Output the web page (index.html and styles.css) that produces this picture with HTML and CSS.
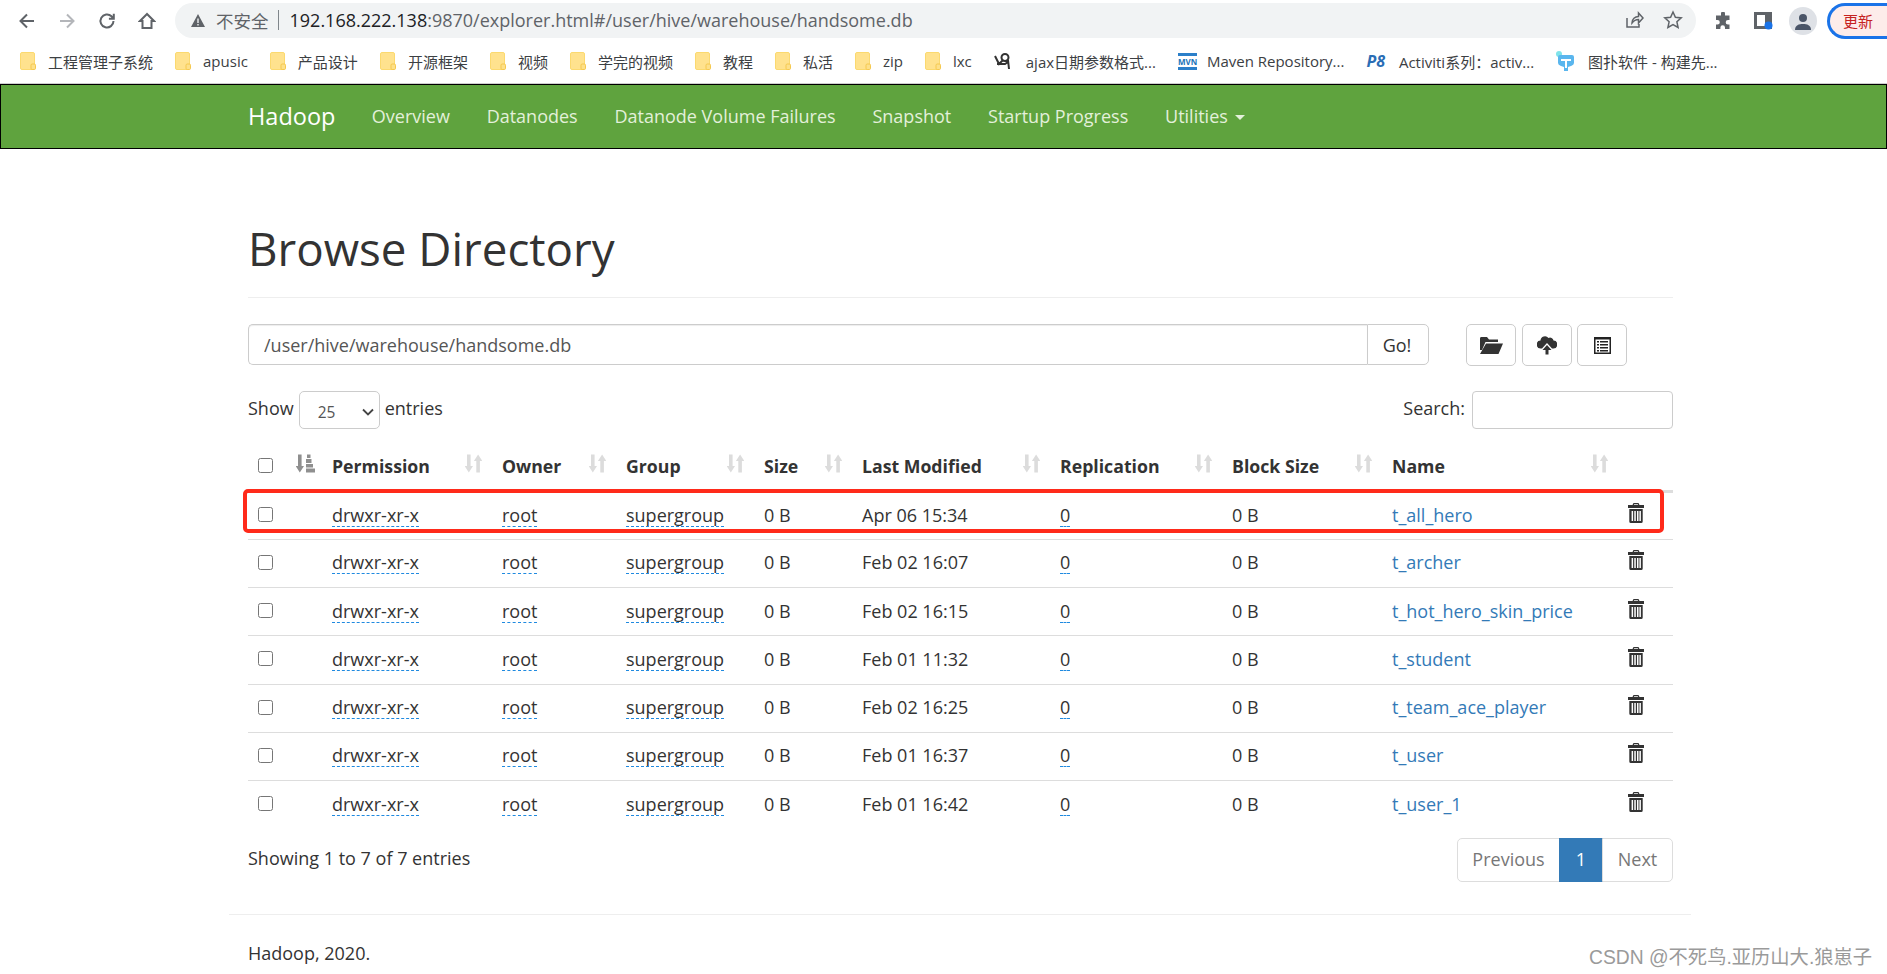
FILE: index.html
```html
<!DOCTYPE html>
<html lang="zh-CN">
<head>
<meta charset="utf-8">
<title>Browsing HDFS</title>
<link rel="stylesheet" href="styles.css">
</head>
<body>
<svg class="defs" aria-hidden="true">
  <symbol id="i-sort" viewBox="0 0 17 19"><path d="M2 .500h3.600V12H8l-4.200 6.500L-.4 12H2zM11.300 7H8.900L13.100.5 17.300 7h-2.400v11.500h-3.600z"/></symbol>
  <symbol id="i-sort-asc" viewBox="0 0 19 19"><path d="M2 .500h3.600V12H8l-4.200 6.500L-.4 12H2zM11 .5h3.500v3.500H11zM10 5h5.500v4H10zM10 10h7v3.500h-7zM10 14.500h9v4h-9z"/></symbol>
  <symbol id="i-trash" viewBox="0 0 16 20"><path fill-rule="evenodd" d="M5.500 0h5l1 2H16v3H0V2h4.500zM6.200 1.200l-.4.8h4.400l-.4-.8zM1.300 6h13.400v12.500q0 1.500-1.500 1.500H2.800q-1.500 0-1.500-1.500zM3.600 8v10h1.500V8zM6.300 8v10h1.500V8zM9 8v10h1.500V8zM11.400 8v10h1.500V8z"/></symbol>
  <symbol id="i-folder" viewBox="0 0 16 18"><rect x=".5" y=".5" width="14" height="17" rx="1.500" fill="#ffe28e" stroke="#fbd96f"/><rect x="11" y="12" width="4.500" height="5.500" rx="1.200" fill="#fde08a" stroke="#f5c84f"/></symbol>
</svg>

<header class="chrome">
  <div class="toolbar">
    <span class="tb-btn"><svg width="18" height="18" viewBox="0 0 18 18" class="ic-line"><path d="M16 9H3M9 2.500 2.500 9 9 15.500"/></svg></span>
    <span class="tb-btn"><svg width="18" height="18" viewBox="0 0 18 18" class="ic-line ic-off"><path d="M2 9h13M9 2.500 15.500 9 9 15.500"/></svg></span>
    <span class="tb-btn"><svg width="18" height="18" viewBox="0 0 18 18" class="ic-line"><path d="M15.500 9a6.500 6.500 0 1 1-2-4.700L15.500 6.500M15.800 1.800v4.900h-4.900"/></svg></span>
    <span class="tb-btn"><svg width="18" height="18" viewBox="0 0 18 18" class="ic-line"><path d="M9 2 2 9h2.500v7h9V9H16z"/></svg></span>
    <div class="omnibox">
      <svg class="warn" width="14" height="13" viewBox="0 0 14 13"><path fill="#5f6368" d="M7 0 14 13H0zM6.300 4.500v4.500h1.400V4.500zM6.300 10v1.400h1.400V10z" fill-rule="evenodd"/></svg>
      <span class="insecure">不安全</span><span class="sep"></span>
      <span class="url"><span class="host">192.168.222.138</span>:9870/explorer.html#/user/hive/warehouse/handsome.db</span>
      <span class="omni-icons">
        <svg width="20" height="20" viewBox="0 0 20 20" class="ic-thin"><path d="M3 8v9h12v-3M8 13c0-4 3-6.500 6.500-6.500V3L19 8l-4.500 5V9.500C11.500 9.500 9.500 11 8 13z"/></svg>
        <svg width="20" height="20" viewBox="0 0 20 20" class="ic-thin"><path d="m10 2 2.400 5.300 5.800.6-4.300 3.900 1.200 5.700-5.100-2.900-5.100 2.900 1.200-5.700-4.300-3.900 5.800-.6z"/></svg>
      </span>
    </div>
    <span class="ext-btn"><svg width="18" height="18" viewBox="0 0 18 18"><path fill="#5f6368" d="M7 1.500a2 2 0 0 1 4 0V3.500h4.500V8H14a2.300 2.300 0 0 0 0 4.600h1.500V17H11v-1.500a2.300 2.300 0 0 0-4.600 0V17H2v-4.500H3.500a2.300 2.300 0 0 0 0-4.600H2V3.500h5z"/></svg></span>
    <span class="ext-btn"><svg width="19" height="18" viewBox="0 0 19 18"><path fill="#5f6368" fill-rule="evenodd" d="M0 0h18v17H0zM3 3v11h8V3z"/><circle cx="14.500" cy="13.500" r="4" fill="#1a73e8"/></svg></span>
    <span class="ext-btn"><span class="avatar"><svg width="18" height="20" viewBox="0 0 18 20"><circle cx="9" cy="6" r="4" fill="#4a5568"/><path fill="#4a5568" d="M1 18c0-5 4-6 8-6s8 1 8 6z"/></svg></span></span>
    <span class="update">更新</span>
  </div>
  <nav class="bookmarks">
    <a class="bm"><svg class="bm-folder"><use href="#i-folder"/></svg>工程管理子系统</a>
    <a class="bm"><svg class="bm-folder"><use href="#i-folder"/></svg>apusic</a>
    <a class="bm"><svg class="bm-folder"><use href="#i-folder"/></svg>产品设计</a>
    <a class="bm"><svg class="bm-folder"><use href="#i-folder"/></svg>开源框架</a>
    <a class="bm"><svg class="bm-folder"><use href="#i-folder"/></svg>视频</a>
    <a class="bm"><svg class="bm-folder"><use href="#i-folder"/></svg>学完的视频</a>
    <a class="bm"><svg class="bm-folder"><use href="#i-folder"/></svg>教程</a>
    <a class="bm"><svg class="bm-folder"><use href="#i-folder"/></svg>私活</a>
    <a class="bm"><svg class="bm-folder"><use href="#i-folder"/></svg>zip</a>
    <a class="bm"><svg class="bm-folder"><use href="#i-folder"/></svg>lxc</a>
    <a class="bm"><svg class="bm-fav" viewBox="0 0 18 18"><path fill="none" stroke="#333" stroke-width="2" d="M1 4 5 12 9 8M11 2a3.500 3.500 0 1 1 0 7 3.500 3.500 0 0 1 0-7zM14 8l1 9M3 12h8l3-2"/></svg>ajax日期参数格式...</a>
    <a class="bm"><span class="mvn">MVN</span>Maven Repository...</a>
    <a class="bm"><span class="ps">P8</span>Activiti系列：activ...</a>
    <a class="bm"><svg class="bm-fav" viewBox="0 0 18 20"><circle cx="3" cy="3" r="3" fill="#7fe3ea"/><path fill="#5ab6ee" d="M4 4h12q2 0 2 2v6q0 2-3 3l-3 1v4H8v-4L5 15q-3-1-3-3V6q0-2 2-2z"/><path fill="#fff" d="M5 8h10v2H11v7H9v-7H5z"/></svg>图扑软件 - 构建先...</a>
  </nav>
</header>

<nav class="navbar">
  <a class="brand">Hadoop</a>
  <a class="nav-link">Overview</a>
  <a class="nav-link">Datanodes</a>
  <a class="nav-link">Datanode Volume Failures</a>
  <a class="nav-link">Snapshot</a>
  <a class="nav-link">Startup Progress</a>
  <a class="nav-link">Utilities <span class="caret"></span></a>
</nav>

<main class="container">
  <div class="page-header"><h1>Browse Directory</h1></div>

  <div class="path-row">
    <div class="input-group">
      <input class="path-input" type="text" value="/user/hive/warehouse/handsome.db">
      <button class="go" type="button">Go!</button>
    </div>
    <div class="tools">
      <button class="tool" type="button"><svg width="24" height="19" viewBox="0 0 24 19"><path fill="#333" d="M2 1h6l2 2.500h9V6H6.500L3 14H1V2.500Q1 1 2 1zM7 7.500h17L19.500 18H1z"/></svg></button>
      <button class="tool" type="button"><svg width="20" height="20" viewBox="0 0 20 20"><path fill="#333" d="M5 13.500H4a4 4 0 0 1-.5-8A4.500 4.500 0 0 1 11.500 3a3.500 3.500 0 0 1 5 2.500 4 4 0 0 1-.5 8h-1L10 8zM10 10l4.500 5H11.500v4.500h-3V15H5.500z"/></svg></button>
      <button class="tool" type="button"><svg width="17" height="17" viewBox="0 0 17 17"><path fill="#222" fill-rule="evenodd" d="M0 0h17v17H0zM1.500 2.500v13h14v-13zM3 4h2v1.500H3zM6 4h8v1.500H6zM3 7h2v1.500H3zM6 7h8v1.500H6zM3 10h2v1.500H3zM6 10h8v1.500H6zM3 13h2v1.500H3zM6 13h8v1.500H6z"/></svg></button>
    </div>
  </div>

  <div class="table-controls">
    <label class="length">Show
      <span class="select-wrap"><select class="length-select"><option>25</option></select><svg class="chevron" width="12" height="8" viewBox="0 0 12 8"><path d="M1 1.500 6 6.500l5-5" fill="none" stroke="#444" stroke-width="1.800"/></svg></span>
      entries</label>
    <label class="search">Search: <input class="search-input" type="search"></label>
  </div>

  <div class="table-wrap">
    <table class="files">
      <colgroup>
        <col class="c1"><col class="c2"><col class="c3"><col class="c4"><col class="c5"><col class="c6"><col class="c7"><col class="c8"><col class="c9"><col class="c10">
      </colgroup>
      <thead>
        <tr>
          <th><div class="th"><input type="checkbox" class="cb"><svg class="sort-active"><use href="#i-sort-asc"/></svg></div></th>
          <th><div class="th">Permission<svg class="sort"><use href="#i-sort"/></svg></div></th>
          <th><div class="th">Owner<svg class="sort"><use href="#i-sort"/></svg></div></th>
          <th><div class="th">Group<svg class="sort"><use href="#i-sort"/></svg></div></th>
          <th><div class="th">Size<svg class="sort"><use href="#i-sort"/></svg></div></th>
          <th><div class="th">Last Modified<svg class="sort"><use href="#i-sort"/></svg></div></th>
          <th><div class="th">Replication<svg class="sort"><use href="#i-sort"/></svg></div></th>
          <th><div class="th">Block Size<svg class="sort"><use href="#i-sort"/></svg></div></th>
          <th><div class="th">Name<svg class="sort"><use href="#i-sort"/></svg></div></th>
          <th></th>
        </tr>
      </thead>
      <tbody>
        <tr><td><input type="checkbox" class="cb"></td><td><span class="dash">drwxr-xr-x</span></td><td><span class="dash">root</span></td><td><span class="dash">supergroup</span></td><td>0 B</td><td>Apr 06 15:34</td><td><span class="dash">0</span></td><td>0 B</td><td><a class="link">t_all_hero</a></td><td><svg class="trash"><use href="#i-trash"/></svg></td></tr>
        <tr><td><input type="checkbox" class="cb"></td><td><span class="dash">drwxr-xr-x</span></td><td><span class="dash">root</span></td><td><span class="dash">supergroup</span></td><td>0 B</td><td>Feb 02 16:07</td><td><span class="dash">0</span></td><td>0 B</td><td><a class="link">t_archer</a></td><td><svg class="trash"><use href="#i-trash"/></svg></td></tr>
        <tr><td><input type="checkbox" class="cb"></td><td><span class="dash">drwxr-xr-x</span></td><td><span class="dash">root</span></td><td><span class="dash">supergroup</span></td><td>0 B</td><td>Feb 02 16:15</td><td><span class="dash">0</span></td><td>0 B</td><td><a class="link">t_hot_hero_skin_price</a></td><td><svg class="trash"><use href="#i-trash"/></svg></td></tr>
        <tr><td><input type="checkbox" class="cb"></td><td><span class="dash">drwxr-xr-x</span></td><td><span class="dash">root</span></td><td><span class="dash">supergroup</span></td><td>0 B</td><td>Feb 01 11:32</td><td><span class="dash">0</span></td><td>0 B</td><td><a class="link">t_student</a></td><td><svg class="trash"><use href="#i-trash"/></svg></td></tr>
        <tr><td><input type="checkbox" class="cb"></td><td><span class="dash">drwxr-xr-x</span></td><td><span class="dash">root</span></td><td><span class="dash">supergroup</span></td><td>0 B</td><td>Feb 02 16:25</td><td><span class="dash">0</span></td><td>0 B</td><td><a class="link">t_team_ace_player</a></td><td><svg class="trash"><use href="#i-trash"/></svg></td></tr>
        <tr><td><input type="checkbox" class="cb"></td><td><span class="dash">drwxr-xr-x</span></td><td><span class="dash">root</span></td><td><span class="dash">supergroup</span></td><td>0 B</td><td>Feb 01 16:37</td><td><span class="dash">0</span></td><td>0 B</td><td><a class="link">t_user</a></td><td><svg class="trash"><use href="#i-trash"/></svg></td></tr>
        <tr><td><input type="checkbox" class="cb"></td><td><span class="dash">drwxr-xr-x</span></td><td><span class="dash">root</span></td><td><span class="dash">supergroup</span></td><td>0 B</td><td>Feb 01 16:42</td><td><span class="dash">0</span></td><td>0 B</td><td><a class="link">t_user_1</a></td><td><svg class="trash"><use href="#i-trash"/></svg></td></tr>
      </tbody>
    </table>
    <div class="highlight"></div>
  </div>

  <div class="table-footer">
    <div class="info">Showing 1 to 7 of 7 entries</div>
    <div class="pagination">
      <a class="page page-first">Previous</a><a class="page page-active">1</a><a class="page page-last">Next</a>
    </div>
  </div>

  <hr class="rule">
  <footer class="footer">Hadoop, 2020.</footer>
</main>

<div class="watermark">CSDN @不死鸟.亚历山大.狼崽子</div>
</body>
</html>
```

FILE: styles.css
```css
* { box-sizing: border-box; }
html, body { height: 974px; overflow: hidden; }
body {
  margin: 0;
  background: #fff;
  color: #333;
  font-family: "Open Sans", "Noto Sans CJK SC", sans-serif;
  font-size: 18px;
}
.defs { position: absolute; width: 0; height: 0; }

/* browser chrome */
.chrome { height: 84px; border-bottom: 1px solid #cfcfcf; }
.toolbar { display: flex; align-items: center; height: 42px; padding: 0 0 0 7px; overflow: hidden; }
.tb-btn { flex: none; width: 40px; display: flex; justify-content: center; align-items: center; }
.ic-line { fill: none; stroke: #5f6368; stroke-width: 2; }
.ic-off { stroke: #b4b6ba; }
.ic-thin { fill: none; stroke: #5f6368; stroke-width: 1.500; }
.omnibox {
  flex: none; display: flex; align-items: center;
  width: 1521px; height: 35px; margin: 0 7px 1px 8px; padding: 0 0 1px 16px;
  background: #f1f3f4; border-radius: 18px;
  font-size: 18px; color: #5f6368; white-space: nowrap;
}
.warn { margin-right: 11px; }
.insecure { font-family: "Noto Sans CJK SC", sans-serif; font-size: 17.500px; }
.sep { width: 1px; height: 20px; background: #80868b; margin: 0 11px 0 9px; }
.host { color: #202124; }
.omni-icons { margin-left: auto; display: flex; gap: 19px; padding-right: 13px; }
.ext-btn { width: 40px; display: flex; justify-content: center; align-items: center; flex: none; }
.avatar { width: 28px; height: 28px; border-radius: 50%; background: #dee1e6; display: flex; align-items: flex-end; justify-content: center; overflow: hidden; padding-bottom: 3px; }
.update {
  flex: none; width: 80px; height: 36px; margin-left: 4px; padding-left: 13px;
  border: 3px solid #1a73e8; border-right: 0; border-radius: 18px 0 0 18px;
  background: #fdecea; color: #c5221f; font-family: "Noto Sans CJK SC", sans-serif; font-size: 15px; line-height: 29px;
}
.bookmarks { display: flex; align-items: center; gap: 22px; height: 41px; padding-left: 20px; font-size: 15px; color: #3c4043; white-space: nowrap; }
.bm { display: flex; align-items: center; margin-bottom: 3px; }
.bm-folder { width: 16px; height: 18px; margin-right: 12px; }
.bm-fav { width: 18px; height: 20px; margin-right: 14px; }
.mvn { width: 19px; margin-right: 10px; color: #1a73b8; font-size: 8px; font-weight: 700; line-height: 11px; border-top: 3px solid #2b7fc9; border-bottom: 3px solid #2b7fc9; text-align: center; }
.ps { width: 21px; margin-right: 11.500px; color: #2a6db5; font-style: italic; font-weight: 700; font-size: 16px; line-height: 20px; }

/* navbar */
.navbar {
  display: flex; align-items: center;
  height: 65px; padding: 0 0 2px 247px;
  background: #5fa33e; border: 1px solid #000;
  color: #e3f0da; font-size: 18px;
}
.brand { color: #fff; font-size: 23.500px; margin-right: 18px; }
.nav-link { padding: 0 18.400px; }
.caret { display: inline-block; width: 0; height: 0; margin-left: 2px; vertical-align: middle; border-top: 5px solid; border-left: 5px solid transparent; border-right: 5px solid transparent; }

/* content */
.container { width: 1462px; margin-left: 229px; padding: 0 18px 0 19px; }
.page-header { height: 149px; padding-top: 71px; border-bottom: 1px solid #eee; }
h1 { margin: 0; font-size: 45.700px; font-weight: 400; line-height: 56px; color: #333; }
.path-row { display: flex; margin-top: 26px; height: 42px; }
.input-group { display: flex; width: 1181px; }
.path-input {
  flex: 1; height: 41px; padding: 0 15px; border: 1px solid #ccc; border-right: 0;
  border-radius: 5px 0 0 5px; font: inherit; color: #555; box-shadow: inset 0 1px 1px rgba(0,0,0,.075);
}
.go { width: 62px; height: 41px; padding: 0 2px 0 0; border: 1px solid #ccc; border-radius: 0 5px 5px 0; background: #fff; font: inherit; color: #333; }
.tools { display: flex; gap: 5.500px; margin-left: 37px; }
.tool { width: 50px; height: 42px; padding: 0; border: 1px solid #ccc; border-radius: 5px; background: #fff; display: flex; align-items: center; justify-content: center; }

.table-controls { display: flex; justify-content: space-between; align-items: flex-start; margin-top: 25px; height: 39px; }
.length { display: flex; align-items: center; gap: 5px; height: 38px; padding-bottom: 5px; }
.select-wrap { display: block; position: relative; width: 81px; height: 38px; margin-top: 5px; }
.length-select {
  appearance: none; width: 100%; height: 100%; padding: 3px 0 0 18px;
  border: 1px solid #ccc; border-radius: 5px; background: #fff; color: #555;
  font-family: inherit; font-size: 15.500px;
}
.chevron { position: absolute; right: 6px; top: 17px; pointer-events: none; }
.search { display: flex; align-items: center; gap: 7px; height: 38px; padding-bottom: 5px; }
.search-input { width: 201px; height: 38px; margin-top: 5px; border: 1px solid #ccc; border-radius: 4px; }

.table-wrap { position: relative; }
.files { border-collapse: collapse; table-layout: fixed; width: 1425px; }
.c1 { width: 74px; } .c2 { width: 170px; } .c3 { width: 124px; } .c4 { width: 138px; } .c5 { width: 98px; }
.c6 { width: 198px; } .c7 { width: 172px; } .c8 { width: 160px; } .c9 { width: 236px; } .c10 { width: 55px; }
.files th { height: 61px; padding: 12px 10px 0; border-bottom: 3px solid #ddd; text-align: left; font-size: 17.700px; font-weight: 700; vertical-align: middle; }
.th { display: flex; justify-content: space-between; align-items: center; }
.th .sort { margin-top: -4px; }
.th .sort-active { margin: -4px -3px 0 0; }
.files td { height: 48.250px; padding: 0 10px 2px; border-bottom: 1px solid #ddd; white-space: nowrap; }
.files tbody tr:last-child td { border-bottom: 0; }
.cb { display: block; width: 15px; height: 15px; margin: 0; }
.sort { width: 17px; height: 19px; fill: #dcdcdc; }
.sort-active { width: 19px; height: 19px; fill: #8f8f8f; }
.dash { display: inline-block; line-height: 22px; border-bottom: 1px dashed #1f8ae0; }
.link { color: #337ab7; }
.trash { display: block; width: 16px; height: 20px; margin: -4px 0 0 0; fill: #333; }
.highlight {
  position: absolute; left: -5px; top: 58.500px; width: 1421px; height: 44.500px;
  border: 4px solid #ff2a1a; border-radius: 5px; pointer-events: none;
}

.table-footer { display: flex; justify-content: space-between; align-items: center; margin-top: 9px; height: 44px; }
.info { padding-bottom: 4px; }
.pagination { display: flex; height: 44px; }
.page { display: flex; align-items: center; justify-content: center; height: 44px; padding-bottom: 2px; border: 1px solid #ddd; margin-left: -1px; color: #777; }
.page-first { width: 103px; border-radius: 5px 0 0 5px; }
.page-active { width: 44px; background: #337ab7; border-color: #337ab7; color: #fff; }
.page-last { width: 71px; border-radius: 0 5px 5px 0; }

.rule { margin: 32px -18px 0 -19px; border: 0; border-top: 1px solid #eee; }
.footer { padding-top: 26px; }
.watermark { position: absolute; left: 1589px; top: 942px; color: #9a9a9a; font-family: "Liberation Sans", "Noto Sans CJK SC", sans-serif; font-size: 19.300px; white-space: nowrap; }
```
